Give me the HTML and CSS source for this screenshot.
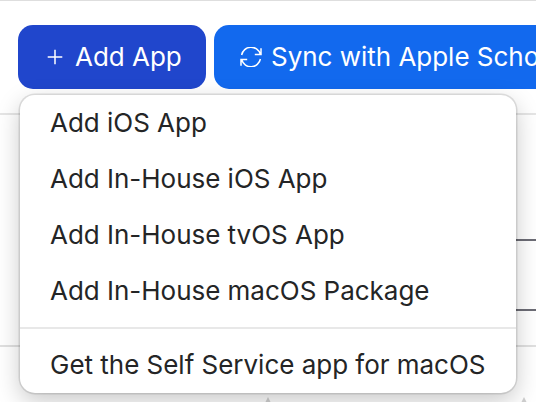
FILE: index.html
```html
<!DOCTYPE html>
<html lang="en">
<head>
<meta charset="utf-8">
<title>Apps</title>
<link rel="stylesheet" href="styles.css">
</head>
<body>
<header class="toolbar">
  <button class="btn btn-active">
    <svg class="icon-plus" viewBox="0 0 16 16"><path d="M8 .7v14.6M.7 8h14.6"/></svg>
    <span>Add App</span>
  </button>
  <button class="btn btn-sync">
    <svg class="icon-sync" viewBox="0 0 22 20"><path d="M1.6 8A9.6 9.6 0 0 1 20.2 7M21 1.2v6.2h-6.2M20.4 12A9.6 9.6 0 0 1 1.8 13M1 18.8v-6.2h6.2"/></svg>
    <span>Sync with Apple School Manager</span>
  </button>
</header>
<main class="content">
  <div class="field"></div>
</main>
<footer class="columns">
  <svg class="sort" viewBox="0 0 10 10"><path d="M5 0l5 10H0z"/></svg>
  <svg class="sort" viewBox="0 0 10 10"><path d="M5 0l5 10H0z"/></svg>
</footer>
<nav class="menu">
  <a class="item">Add iOS App</a>
  <a class="item">Add In-House iOS App</a>
  <a class="item">Add In-House tvOS App</a>
  <a class="item">Add In-House macOS Package</a>
  <a class="item item-last">Get the Self Service app for macOS</a>
</nav>
</body>
</html>
```
FILE: styles.css
```css
* { box-sizing: border-box; }
body {
  margin: 0;
  width: 536px;
  height: 402px;
  overflow: hidden;
  position: relative;
  background: #fff;
  color: #242526;
  font: 400 26px/32px Inter, "Liberation Sans", sans-serif;
  letter-spacing: -.02px;
}
.toolbar {
  display: flex;
  gap: 8px;
  height: 115px;
  padding: 24px 0 0 18px;
  border-top: 1px solid #dedede;
  border-bottom: 2px solid #e5e5e5;
}
.btn {
  display: flex;
  align-items: center;
  flex: none;
  height: 64px;
  padding: 0 24px;
  border: 0;
  border-radius: 15px;
  background: #1269ee;
  color: #fff;
  font: inherit;
  letter-spacing: inherit;
  white-space: nowrap;
}
.btn-active {
  width: 188px;
  padding-left: 29px;
  background: #2046cc;
}
.btn-sync {
  flex: 1;
  min-width: 0;
  padding-right: 0;
  border-radius: 15px 0 0 15px;
  overflow: hidden;
}
.btn svg {
  flex: none;
  fill: none;
  stroke: #fff;
  stroke-width: 1.5;
}
.icon-plus { width: 16px; height: 16px; margin-right: 12px; }
.icon-sync { width: 22px; height: 20px; margin: 0 9px 0 2px; }
.content {
  height: 232px;
  padding: 124px 0 0 268px;
  border-bottom: 2px solid #e0e0e0;
}
.field {
  height: 72px;
  border: solid #6c6c75;
  border-width: 2px 0;
}
.columns {
  display: flex;
  gap: 246px;
  padding: 50px 0 0 263px;
}
.sort { flex: none; width: 10px; height: 10px; fill: #d0d0d0; }
.menu {
  position: absolute;
  left: 20px;
  top: 95px;
  width: 496px;
  height: 298px;
  border-radius: 15px;
  background: #fff;
  box-shadow: 0 0 0 1.5px rgba(0, 0, 0, .11), 0 8px 24px rgba(0, 0, 0, .22);
}
.item {
  display: block;
  height: 56px;
  padding: 12px 30px;
  white-space: nowrap;
}
.item-last {
  height: 66px;
  margin-top: 8px;
  padding-top: 20px;
  border-top: 2px solid #e8e8e8;
}
```
